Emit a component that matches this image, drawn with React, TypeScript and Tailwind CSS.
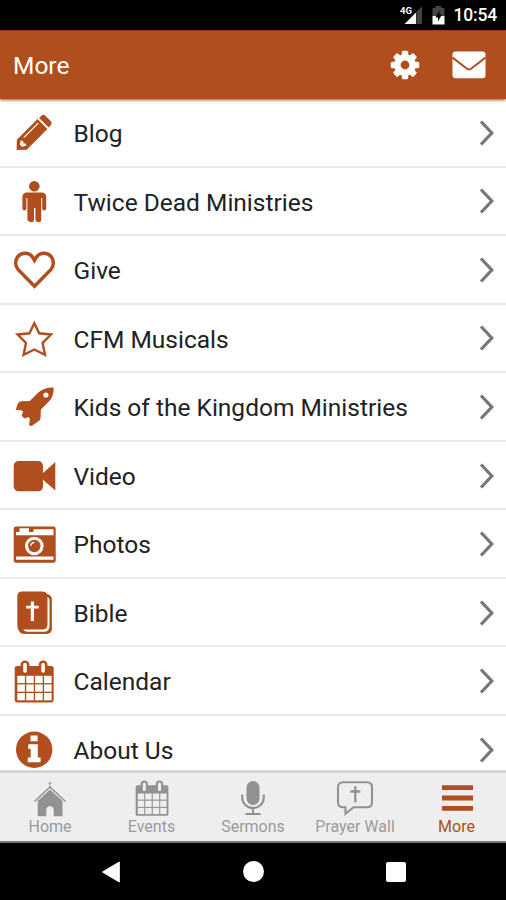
import type { ReactNode } from "react";

const O = "#b04e1d";

function Pencil() {
  return (
    <g fill={O} transform="rotate(45 24.300 24.200)">
      <path d="M17.600 8q0-3.200 3-3.200h7.400q3 0 3 3.200v2.700H17.600z" />
      <path d="M17.300 12.700h14v29.200l-7 7.300-7-7.300z" />
      <path d="M20.700 15v20.500" stroke="#fff" strokeWidth="1.200" />
      <path d="M20.500 39.600l2-1.300 2 1.300 2-1.300 1.600 1.300-2.300 3.600h-3z" fill="#fff" />
    </g>
  );
}

function Person() {
  return (
    <g fill={O}>
      <circle cx="24.300" cy="9.200" r="5.300" />
      <path d="M17 15.600h14.600q4.600 0 4.600 4.600v11.200q0 2-2 2t-2-2V21h-1v22q0 2.300-2.400 2.300T25.400 43V31h-1.400V43q0 2.300-2.400 2.300T17.400 43V21h-1v10.400q0 2-2 2t-2-2V20.200q0-4.600 4.600-4.600z" />
    </g>
  );
}

function Heart() {
  return (
    <path d="M24.500 41.300L8.200 24.600C5 21 4.800 15.500 7.800 11.600 11.500 7 19 7 22.500 12l2 3.300 2-3.300C30 7 37.500 7 41.200 11.600c3 3.900 2.800 9.400-.4 13z" fill="none" stroke={O} strokeWidth="3.500" />
  );
}

function Star() {
  return (
    <path d="M24.300 9.200L29.200 19.300 41 20.500 32.600 28.800 35 40.800 24.300 35.500 13.600 40.800 16 28.800 7.600 20.500 19.400 19.300z" fill="none" stroke={O} strokeWidth="2.400" />
  );
}

function Rocket() {
  return (
    <>
      <path d="M43.600 5.500C37 5.300 31.500 7.200 27.500 11.300L19.800 19l-8.500.3q-2.300.2-3.400 2.200L5.600 28l5.500.2 2 1.300-1.500 4.300 2.800 2.600 4.200-1.300 1.300 2L19 43.200l2.700.8 7.400-5.200q1.600-1.300 1.500-3.400l.2-7.600 6.300-6.500C41.700 17.300 43.900 12.500 43.600 5.500z" fill={O} />
      <circle cx="35.900" cy="13" r="2.600" fill="#fff" />
    </>
  );
}

function Video() {
  return (
    <g fill={O}>
      <rect x="3.700" y="10" width="29.300" height="30.300" rx="4.800" />
      <path d="M32.500 22.500L45.300 11v28.500L32.500 28.300z" />
    </g>
  );
}

function Photos() {
  return (
    <>
      <rect x="3.700" y="6.500" width="42" height="36.200" rx="2.300" fill={O} />
      <path d="M9.500 8.300h9.500v3.600h4.500V9.300H43.500v5.900H6v-3.300h3.500z" fill="#fff" />
      <path d="M6 36.500h37.500v3.300H6z" fill="#fff" />
      <circle cx="24.300" cy="26" r="9.300" fill="#fff" />
      <circle cx="24.300" cy="26" r="6.200" fill={O} />
      <path d="M20.800 26a3.500 3.500 0 0 1 3.500-3.500" fill="none" stroke="#fff" strokeWidth="1.300" />
    </>
  );
}

function Bible() {
  return (
    <>
      <path d="M12 3.500h20q4 0 5 2.600 4.900 1 4.900 5.500v29q0 5.400-5.400 5.400H14.500q-4.500 0-6-4Q7.300 40 7.300 36V8.200q0-4.700 4.700-4.700z" fill={O} />
      <path d="M37.500 9v27.500q0 5-5.200 5H13q2 2.300 4.500 2.300h16.300q5.700 0 5.700-6V12q0-2-2-3z" fill="#fff" />
      <path d="M20.800 13.500h3.200v4.200h4.700v2.700H24v12.600h-3.200V20.400h-4.700v-2.700h4.700z" fill="#fff" />
    </>
  );
}

function CalendarShape({ color, paper }: { color: string; paper: string }) {
  return (
    <>
      <rect x="4.700" y="8.900" width="39" height="36.500" rx="2.300" fill={color} />
      <rect x="10.600" y="3.400" width="8.800" height="14" rx="4.200" fill={color} />
      <rect x="28.700" y="3.400" width="8.800" height="14" rx="4.200" fill={color} />
      <rect x="13.200" y="5.700" width="3.600" height="10" rx="1.800" fill={paper} />
      <rect x="31.300" y="5.700" width="3.600" height="10" rx="1.800" fill={paper} />
      {[18.800, 27.400, 36].map((y) =>
        [7.300, 16.200, 25.100, 34].map((x) => (
          <rect key={`${x}-${y}`} x={x} y={y} width="7.600" height="7.300" fill={paper} />
        )),
      )}
    </>
  );
}

function About() {
  return (
    <>
      <circle cx="24.200" cy="24.700" r="18.200" fill={O} />
      <path d="M20.600 10.600h7v5.600h-7zM18.300 19.200h9.500v13.300h2.800v4.800H17.800v-4.800h2.900V24h-2.400z" fill="#fff" />
    </>
  );
}

const rows: { label: string; icon: ReactNode }[] = [
  { label: "Blog", icon: <Pencil /> },
  { label: "Twice Dead Ministries", icon: <Person /> },
  { label: "Give", icon: <Heart /> },
  { label: "CFM Musicals", icon: <Star /> },
  { label: "Kids of the Kingdom Ministries", icon: <Rocket /> },
  { label: "Video", icon: <Video /> },
  { label: "Photos", icon: <Photos /> },
  { label: "Bible", icon: <Bible /> },
  { label: "Calendar", icon: <CalendarShape color={O} paper="#fff" /> },
  { label: "About Us", icon: <About /> },
];

const G = "#929292";

const tabs: { label: string; active?: boolean; icon: ReactNode }[] = [
  {
    label: "Home",
    icon: (
      <g>
        <path d="M4.500 22.500L20 8l15.500 14.500" fill="none" stroke={G} strokeWidth="1.600" />
        <path d="M20 10.500L32.500 22v15.300h-8.800V31q0-3.700-3.700-3.700T16.300 31v6.300H7.700V22z" fill={G} />
        <path d="M20 2.500V9M18.300 4.300h3.400" stroke={G} strokeWidth="1.200" strokeOpacity=".7" />
      </g>
    ),
  },
  {
    label: "Events",
    icon: (
      <g transform="translate(-.3 -1.300) scale(.84)">
        <CalendarShape color={G} paper="#eee" />
      </g>
    ),
  },
  {
    label: "Sermons",
    icon: (
      <g>
        <rect x="13.500" y="2" width="13" height="24" rx="6.500" fill={G} />
        <path d="M9.200 15.500v3.200a10.800 10.400 0 0 0 21.600 0v-3.200M20 29v5M12.500 35h15" fill="none" stroke={G} strokeWidth="2.100" />
      </g>
    ),
  },
  {
    label: "Prayer Wall",
    icon: (
      <g fill="none" stroke={G}>
        <path d="M8 3.200h24q5 0 5 5v15q0 5-5 5H18.500l-8 6.500V28.200H8q-5 0-5-5v-15q0-5 5-5z" strokeWidth="2.100" />
        <path d="M20.300 7.300v16M15.300 12.500h10" strokeWidth="2.300" />
      </g>
    ),
  },
  {
    label: "More",
    active: true,
    icon: <path d="M5 8.700h31M5 19h31M5 29.300h31" stroke={O} strokeWidth="4.800" />,
  },
];

function StatusBar() {
  return (
    <div className="flex h-[30px] shrink-0 items-center bg-black pl-[398px]">
      <svg className="h-[30px] w-[52px] shrink-0" viewBox="0 0 52 30">
        <path d="M18 12.500V24H6.500z" fill="#fff" />
        <path d="M18.300 11.800L24 6.500V24h-5.700z" fill="#444" />
        <text x="2" y="14" fontSize="9.500" fontWeight="700" fill="#fff" className="font-['Roboto',sans-serif]">4G</text>
        <path d="M37.500 6h6v2h3v8h-12V8h3z" fill="#444" />
        <path d="M34.500 16h12v8.500h-12z" fill="#fff" />
        <path d="M41.500 10l-4 7.500h2.500v4l4-7h-2.500z" fill="#000" />
      </svg>
      <span className="ml-[3.500px] mt-[1px] text-[17.500px] font-medium leading-none tracking-[-0.200px] text-white">10:54</span>
    </div>
  );
}

export default function App() {
  return (
    <div className="flex h-[900px] w-[506px] flex-col overflow-hidden bg-white font-['Roboto',sans-serif]">
      <StatusBar />
      <header className="z-10 flex h-[69px] shrink-0 items-center justify-between border-t border-[#963d13] bg-[#b04e1d] pl-[13px] pr-[20px] shadow-[0_1px_3px_rgba(50,20,10,0.7)]">
        <h1 className="mt-[2px] text-[24.500px] leading-none text-white">More</h1>
        <div className="flex items-center gap-[32px]">
          <svg className="size-[30px]" viewBox="0 0 30 30">
            <g fill="#fff">
              {[0, 45, 90, 135].map((a) => (
                <rect key={a} x="11.800" y=".800" width="6.400" height="28.400" rx="1.500" transform={`rotate(${a} 15 15)`} />
              ))}
              <circle cx="15" cy="15" r="10.800" />
            </g>
            <circle cx="15" cy="15" r="4.400" fill={O} />
          </svg>
          <svg className="h-[28px] w-[34px]" viewBox="0 0 34 28">
            <rect x=".5" y=".6" width="33" height="26.600" rx="3" fill="#fff" />
            <path d="M.5 6.500L15 17.800q2 1.500 4 0L33.500 6.500" fill="none" stroke={O} strokeWidth="2" />
          </svg>
        </div>
      </header>
      <main className="flex h-[671px] shrink-0 flex-col overflow-hidden">
        {rows.map((row) => (
          <div key={row.label} className="flex h-[68.550px] shrink-0 items-center border-b-2 border-[#e9e9e9] pl-[10px] pr-[11px]">
            <svg className="size-[48px] shrink-0" viewBox="0 0 48 48">{row.icon}</svg>
            <span className="ml-[15.500px] mt-[4px] grow whitespace-nowrap text-[24.500px] leading-none text-[#222]">{row.label}</span>
            <svg className="mt-[1px] h-[28px] w-[16px] shrink-0" viewBox="0 0 16 28">
              <path d="M2 2.500l10.800 11.500L2 25.500" fill="none" stroke="#777" strokeWidth="3.200" />
            </svg>
          </div>
        ))}
      </main>
      <nav className="grid h-[73px] shrink-0 grid-cols-[100px_103px_100px_104px_99px] border-b-2 border-t-[3px] border-b-[#777] border-t-[#d6d6d6] bg-[#eee]">
        {tabs.map((tab) => (
          <div key={tab.label} className="flex flex-col items-center pt-[6px]">
            <svg className="size-[40px] shrink-0" viewBox="0 0 40 40">{tab.icon}</svg>
            <span className={tab.active ? "whitespace-nowrap text-[16px] leading-none text-[#b04e1d]" : "whitespace-nowrap text-[16px] leading-none text-[#9b9b9b]"}>
              {tab.label}
            </span>
          </div>
        ))}
      </nav>
      <footer className="flex grow items-center justify-between bg-black pl-[101px] pr-[100px]">
        <svg className="h-[22px] w-[20px]" viewBox="0 0 20 22">
          <path d="M18.300 1v20L1.500 11z" fill="#fff" stroke="#fff" strokeWidth="1" strokeLinejoin="round" />
        </svg>
        <div className="mr-[1px] size-[21px] rounded-full bg-white" />
        <div className="size-[20px] rounded-[2px] bg-white" />
      </footer>
    </div>
  );
}
